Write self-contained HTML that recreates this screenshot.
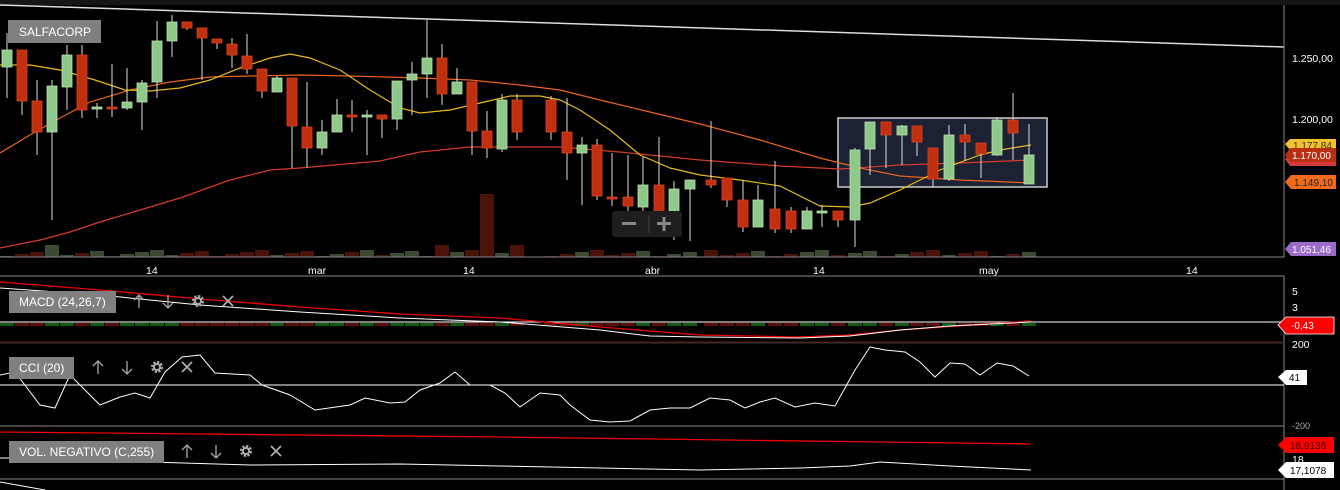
<!DOCTYPE html><html><head><meta charset="utf-8"><style>
body{margin:0;background:#000;width:1340px;height:490px;overflow:hidden;font-family:"Liberation Sans",sans-serif}
svg{display:block}
text{font-family:"Liberation Sans",sans-serif}
</style></head><body>
<svg id="s" width="1340" height="490" xmlns="http://www.w3.org/2000/svg">
<rect width="1340" height="490" fill="#000"/>
<rect width="1340" height="5" fill="#161616"/>
<line x1="0" y1="5" x2="1284" y2="47" stroke="#ddd" stroke-width="1.5"/>
<rect x="838" y="118" width="209" height="69" fill="#1c2233" stroke="#ccc" stroke-width="1.5"/>
<g id="vol"></g>
<polyline fill="none" stroke="#d63a2a" stroke-width="1.2" points="0,248 40,240 70,232 100,222 140,210 180,198 230,180 270,170 300,168 380,161 420,152 470,147 520,147 560,147 620,152 700,160 780,166 840,169 900,165 960,163 1031,160"/>
<polyline fill="none" stroke="#e8641e" stroke-width="1.2" points="0,153 30,135 60,118 90,102 130,90 170,82 210,77 250,76 300,75 350,76 420,78 470,80 520,85 560,90 600,100 650,112 700,124 760,140 820,158 860,168 900,176 960,180 1031,183"/>
<polyline fill="none" stroke="#e8b81e" stroke-width="1.2" points="0,65 30,65 60,70 95,80 125,90 150,91 180,88 210,80 240,68 270,58 290,54 310,58 340,70 370,90 400,108 420,113 450,110 480,103 510,96 540,96 560,100 580,110 610,130 640,155 670,168 700,175 740,180 780,186 820,206 850,207 870,203 900,190 940,170 980,155 1000,150 1031,145"/>
<g id="c"></g>
<rect x="8" y="20" width="93" height="23" fill="#808080"/>
<text x="19" y="36" fill="#fff" font-size="12">SALFACORP</text>
<rect x="612" y="211" width="70" height="26" rx="3" fill="#1e1e1e"/>
<rect x="622" y="222" width="14" height="3" fill="#888"/><line x1="649" y1="215" x2="649" y2="233" stroke="#444"/>
<rect x="657" y="222" width="14" height="3" fill="#888"/><rect x="662.5" y="217" width="3" height="14" fill="#888"/>
<line x1="1284" y1="5" x2="1284" y2="257" stroke="#888"/>
<line x1="0" y1="257" x2="1284" y2="257" stroke="#888"/>
<g fill="#fff" font-size="10.5">
<text x="1292" y="62">1.250,00</text><text x="1292" y="123">1.200,00</text>
<text x="146" y="274">14</text><text x="308" y="274">mar</text><text x="463" y="274">14</text><text x="645" y="274">abr</text><text x="813" y="274">14</text><text x="979" y="274">may</text><text x="1186" y="274">14</text>
</g>
<g font-size="10">
<path d="M1285,144 l5,-5 h46 v11 h-46z" fill="#f2c12e"/><text x="1293" y="149" fill="#333">1.177,84</text>
<path d="M1285,159 l5,-5 h46 v12 h-46z" fill="#d63a3a"/>
<path d="M1285,155 l5,-7 h46 v14 h-46z" fill="#b8300f"/><text x="1292" y="159" fill="#fff">1.170,00</text>
<path d="M1285,182 l6,-7 h45 v14 h-45z" fill="#f26b1d"/><text x="1294" y="186" fill="#222">1.149,10</text>
<path d="M1285,249 l6,-7 h45 v14 h-45z" fill="#9b6bc7"/><text x="1292" y="253" fill="#fff">1.051,46</text>
</g>
<line x1="0" y1="276" x2="1284" y2="276" stroke="#888"/>
<line x1="1284" y1="276" x2="1284" y2="490" stroke="#888"/>
<g id="h"></g>
<line x1="0" y1="322" x2="1284" y2="322" stroke="#fff"/>
<polyline fill="none" stroke="#e00" stroke-width="1.3" points="0,282 100,290 200,299 300,307 400,314 500,318 600,327 700,335 800,337 850,335 900,330 1031,321"/>
<polyline fill="none" stroke="#fff" stroke-width="1" points="0,288 100,295 200,305 300,312 400,318 500,322 600,330 650,336 700,337 800,338 850,336 900,330 950,326 1031,322"/>
<line x1="0" y1="342" x2="1284" y2="342" stroke="#5a1a1a"/>
<line x1="0" y1="343" x2="1284" y2="343" stroke="#333"/>
<g fill="#fff" font-size="10.5"><text x="1292" y="295">5</text><text x="1292" y="311">3</text><text x="1292" y="348">200</text><text x="1292" y="429" fill="#aaa" font-size="9">-200</text><text x="1292" y="463">18</text></g>
<path d="M1278,325 l8,-8 h48 v17 h-48z" fill="#f00" stroke="#fff" stroke-width="0.8"/><text x="1291" y="329" fill="#fff" font-size="10">-0,43</text>
<line x1="0" y1="385" x2="1284" y2="385" stroke="#fff"/>
<polyline fill="none" stroke="#fff" stroke-width="1" points="0,375 15,372 40,405 55,408 70,375 100,405 120,397 135,393 150,398 165,372 182,357 200,355 215,373 250,375 262,385 290,395 315,410 350,405 365,398 390,403 405,402 420,390 440,383 455,372 470,385 490,385 505,393 520,407 540,393 560,395 570,405 590,420 610,422 630,421 650,410 670,408 690,408 710,398 730,400 745,408 760,402 775,398 795,407 815,403 835,406 855,370 870,347 885,350 905,352 920,362 935,377 950,363 965,364 980,375 997,363 1013,366 1029,376"/>
<path d="M1278,377 l8,-7 h21 v15 h-21z" fill="#fff"/><text x="1289" y="381" fill="#000" font-size="10">41</text>
<line x1="0" y1="426" x2="1284" y2="426" stroke="#888"/>
<polyline fill="none" stroke="#e00" stroke-width="1.3" points="0,432 500,437 1031,444"/>
<polyline fill="none" stroke="#fff" stroke-width="1" points="0,458 60,458 90,462 150,462 250,465 400,464 500,466 600,468 700,470 800,468 850,466 880,462 950,466 1031,470"/>
<polyline fill="none" stroke="#fff" stroke-width="1" points="0,482 45,490"/>
<path d="M1278,445 l8,-8 h48 v16 h-48z" fill="#f00"/><text x="1290" y="449" fill="#300" font-size="10">18,9136</text>
<path d="M1278,470 l8,-8 h48 v16 h-48z" fill="#fff"/><text x="1290" y="474" fill="#000" font-size="10">17,1078</text>
<line x1="0" y1="479" x2="1284" y2="479" stroke="#888"/>
<g font-size="12" fill="#fff">
<rect x="9" y="291" width="107" height="22" fill="#808080"/><text x="19" y="306">MACD (24,26,7)</text>
<rect x="9" y="357" width="65" height="22" fill="#808080"/><text x="19" y="372">CCI (20)</text>
<rect x="9" y="441" width="155" height="22" fill="#808080"/><text x="19" y="456">VOL. NEGATIVO (C,255)</text>
</g>
<g id="ic" stroke="#aaa" stroke-width="1.3" fill="none"></g>
</svg>
<script>
var C=[[7,50,67,33,98,1],[22,50,101,50,115,0],[37,101,132,80,155,0],[52,86,132,80,220,1],[67,55,87,45,110,1],[82,55,110,45,118,0],[97,107,109,103,118,1],[112,107,109,64,117,0],[127,102,108,68,110,1],[142,83,102,80,130,1],[157,41,82,21,98,1],[172,22,41,15,57,1],[187,22,28,22,30,0],[202,28,38,28,80,0],[217,39,43,39,49,0],[232,44,55,38,68,0],[247,56,69,34,74,0],[262,69,91,69,98,0],[277,78,92,76,92,1],[292,78,126,78,168,0],[307,127,148,82,168,0],[322,132,148,120,155,1],[337,115,132,99,132,1],[352,115,117,100,132,0],[367,115,117,110,155,1],[382,115,119,115,138,0],[397,81,119,81,130,1],[412,74,80,62,115,1],[427,58,74,20,98,1],[442,58,94,44,105,0],[457,82,94,68,94,1],[472,82,131,82,155,0],[487,131,148,111,158,0],[502,100,149,94,152,1],[517,100,132,94,140,0],[551,100,132,96,140,0],[567,132,153,98,180,0],[582,145,153,137,205,1],[597,145,196,139,200,0],[612,197,199,153,206,0],[628,197,206,155,214,0],[643,185,207,157,214,1],[659,185,212,137,212,0],[674,189,212,181,240,1],[690,180,189,180,241,1],[711,180,185,121,188,0],[727,178,200,178,207,0],[743,200,227,180,232,0],[758,200,227,185,227,1],[775,209,229,161,233,0],[791,211,229,207,233,0],[807,211,229,207,229,1],[822,211,213,205,227,1],[838,211,220,211,227,0],[855,150,220,148,247,1],[870,122,149,122,175,1],[886,122,135,122,168,0],[902,126,135,125,165,1],[917,126,142,126,156,0],[933,148,179,148,187,0],[949,135,179,125,181,1],[965,135,142,124,160,0],[981,143,154,143,178,0],[997,120,155,117,156,1],[1013,120,133,93,160,0],[1029,155,184,124,184,1]];
var s='',v='',h='';
C.forEach(function(c,i){var x=c[0],g=c[5];
s+='<line x1="'+x+'" y1="'+c[3]+'" x2="'+x+'" y2="'+c[4]+'" stroke="#ddd" stroke-width="1"/>';
s+='<rect x="'+(x-5)+'" y="'+c[1]+'" width="10" height="'+Math.max(2,c[2]-c[1])+'" fill="'+(g?'#8fc98a':'#c0300f')+'" stroke="'+(g?'#b8e0b0':'#e04020')+'" stroke-width="0.8"/>';
var hh=(i*37%7)+1; if(i==32)hh=63; if(i==3||i==29||i==34)hh=12;
v+='<rect x="'+(x-7)+'" y="'+(257-hh)+'" width="14" height="'+hh+'" fill="'+(g?'#3b4a31':'#4a1208')+'"/>';
h+='<rect x="'+(x-7)+'" y="323" width="14" height="3" fill="'+(g?'#145a14':'#5a0e0e')+'"/>';
});
document.getElementById('c').innerHTML=s;document.getElementById('vol').innerHTML=v;document.getElementById('h').innerHTML=h;
var ic='';
[[139,301],[98,367],[187,451]].forEach(function(p){var x=p[0],y=p[1];
ic+='<path d="M'+x+','+(y+7)+'V'+(y-6)+'M'+(x-5)+','+(y-1)+'L'+x+','+(y-6)+'L'+(x+5)+','+(y-1)+'"/>';
ic+='<path d="M'+(x+29)+','+(y-6)+'V'+(y+7)+'M'+(x+24)+','+(y+2)+'L'+(x+29)+','+(y+7)+'L'+(x+34)+','+(y+2)+'"/>';
ic+='<circle cx="'+(x+59)+'" cy="'+y+'" r="4.5" stroke-width="3" stroke-dasharray="2.2 1.3"/><circle cx="'+(x+59)+'" cy="'+y+'" r="3" stroke-width="2"/>';
ic+='<path d="M'+(x+84)+','+(y-5)+'l10,10M'+(x+94)+','+(y-5)+'l-10,10" stroke-width="1.8"/>';});
document.getElementById('ic').innerHTML=ic;
</script>
</body></html>
